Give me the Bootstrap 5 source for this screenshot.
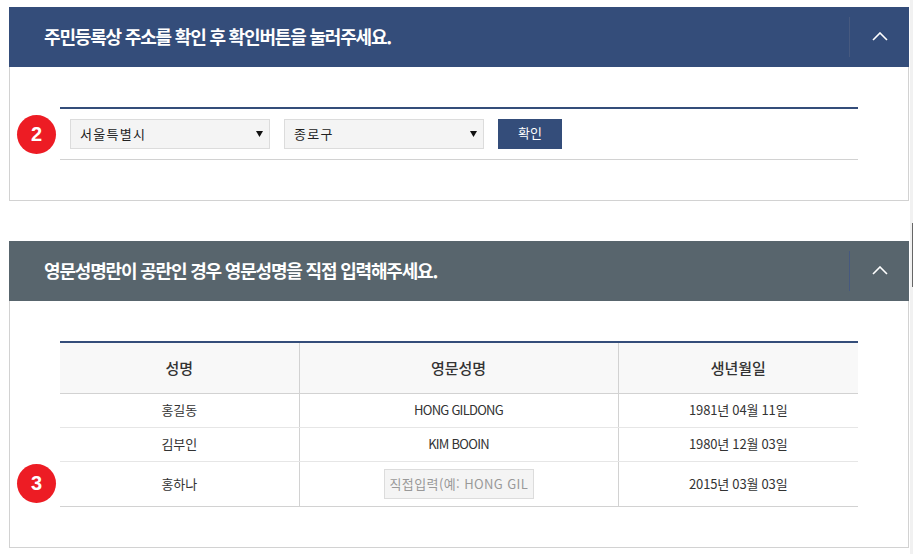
<!DOCTYPE html>
<html lang="ko">
<head>
<meta charset="utf-8">
<title>영문성명 입력</title>
<link href="https://cdn.jsdelivr.net/npm/bootstrap@5.3.0/dist/css/bootstrap.min.css" rel="stylesheet">
<style>
html,body{height:554px;overflow:hidden;background:#fff}
body{font-family:"Noto Sans CJK KR","Liberation Sans",sans-serif;color:#333;font-size:13px;position:relative;padding:7px 4px 0 9px}
.scroll-track{position:absolute;top:0;right:0;bottom:0;width:3px;background:#f1f1f1}
.scroll-thumb{position:absolute;top:223px;right:0;width:1px;height:64px;background:#666}
.fold{width:900px;margin-bottom:40px;position:relative}
.fold:last-of-type{margin-bottom:0}
.fold-head{height:60px;color:#fff;padding-left:35px}
.fold-head.navy{background:#344d7a}
.fold-head.slate{background:#58656d}
.fold-title{font-size:18px;font-weight:700;letter-spacing:-1.18px;margin:0 0 2px;line-height:58px}
.fold-btn{width:60px;height:40px;border:0;border-left:1px solid #46597f;background:none;padding:0;margin-right:0}
.fold-btn svg{display:block;margin:0 auto}
.fold-body{border:1px solid #d2d2d2;border-top:0;padding:40px 50px}
.addr-row{width:798px;border-top:2px solid #344d7a;border-bottom:1px solid #d2d2d2;height:53px;padding:10px 10px 0;gap:14px}
.addr-sel{width:200px;height:30px;border:1px solid #dcdcdc;background:#f4f4f4 url("data:image/svg+xml,%3Csvg xmlns='http://www.w3.org/2000/svg' width='7' height='6'%3E%3Cpath d='M0 0h7L3.5 6z' fill='%23111'/%3E%3C/svg%3E") no-repeat right 6px center;appearance:none;-webkit-appearance:none;border-radius:0;padding:0 9px;font-size:13px;color:#222;letter-spacing:1.3px;font-family:inherit}
.ok-btn{width:64px;height:30px;background:#344d7a;color:#fff;border:0;border-radius:0;font-size:13px;padding:0 0 2px}
.step-dot{position:absolute;left:8px;width:39px;height:39px;border-radius:50%;background:#ed1c24;color:#fff;font:700 20px/39px "Liberation Sans",sans-serif;text-align:center}
.step-two{top:108px}
.step-three{top:223px}
.name-tbl{width:798px;table-layout:fixed;border-top:2px solid #344d7a;margin:0;font-size:13px;letter-spacing:-.2px;color:#333}
.name-tbl th,.name-tbl td{text-align:center;vertical-align:middle;padding:0;border-right:1px solid #d2d2d2}
.name-tbl th:last-child,.name-tbl td:last-child{border-right:0}
.name-tbl th{height:51px;background:#f8f8f8;font-size:15px;font-weight:500;letter-spacing:0;border-bottom:1px solid #d2d2d2;color:#333}
.name-tbl td{height:34px;border-bottom:1px solid #e6e6e6}
.name-tbl tr.end td{height:45px;border-bottom:1px solid #d2d2d2}
.name-tbl td.latin-name{letter-spacing:-.75px}
.eng-input{width:150px;height:30px;border:1px solid #dcdcdc;background:#f4f4f4;padding:0 5px;font-size:13px;font-family:inherit;letter-spacing:.4px;border-radius:0;display:block;margin:0 auto}
.eng-input::placeholder{color:#999;opacity:1}
</style>
</head>
<body>
<section class="fold">
  <div class="fold-head navy d-flex justify-content-between align-items-center">
    <h2 class="fold-title">주민등록상 주소를 확인 후 확인버튼을 눌러주세요.</h2>
    <button class="fold-btn" type="button" aria-label="접기"><svg width="16" height="10" viewBox="0 0 16 10"><path d="M1 8l7-7 7 7" fill="none" stroke="#fff" stroke-width="1.6"/></svg></button>
  </div>
  <div class="fold-body">
    <div class="addr-row d-flex align-items-start">
      <select class="addr-sel"><option>서울특별시</option></select>
      <select class="addr-sel"><option>종로구</option></select>
      <button class="ok-btn btn" type="button">확인</button>
    </div>
  </div>
  <span class="step-dot step-two">2</span>
</section>
<section class="fold">
  <div class="fold-head slate d-flex justify-content-between align-items-center">
    <h2 class="fold-title">영문성명란이 공란인 경우 영문성명을 직접 입력해주세요.</h2>
    <button class="fold-btn" type="button" aria-label="접기"><svg width="16" height="10" viewBox="0 0 16 10"><path d="M1 8l7-7 7 7" fill="none" stroke="#fff" stroke-width="1.6"/></svg></button>
  </div>
  <div class="fold-body">
    <table class="table name-tbl">
      <colgroup><col style="width:239px"><col style="width:319px"><col style="width:240px"></colgroup>
      <thead><tr><th>성명</th><th>영문성명</th><th>생년월일</th></tr></thead>
      <tbody>
        <tr><td>홍길동</td><td class="latin-name">HONG GILDONG</td><td>1981년 04월 11일</td></tr>
        <tr><td>김부인</td><td class="latin-name">KIM BOOIN</td><td>1980년 12월 03일</td></tr>
        <tr class="end"><td>홍하나</td><td><input class="eng-input" placeholder="직접입력(예: HONG GILDONG)"></td><td>2015년 03월 03일</td></tr>
      </tbody>
    </table>
  </div>
  <span class="step-dot step-three">3</span>
</section>
<div class="scroll-track"><div class="scroll-thumb"></div></div>
<script src="https://cdn.jsdelivr.net/npm/bootstrap@5.3.0/dist/js/bootstrap.bundle.min.js"></script>
</body>
</html>
